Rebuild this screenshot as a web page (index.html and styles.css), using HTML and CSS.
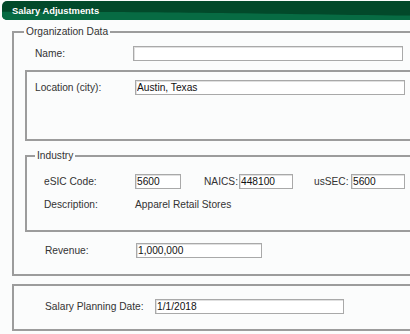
FILE: index.html
```html
<!DOCTYPE html>
<html lang="en">
<head>
<meta charset="utf-8">
<title>Salary Adjustments</title>
<link rel="stylesheet" href="styles.css">
</head>
<body>
<div class="page">
  <div class="titlebar">
    <svg class="titlebar-bg" viewBox="0 0 420 19" preserveAspectRatio="none" aria-hidden="true">
      <path d="M0 10.7 C150 10.4 240 12.6 420 15 L420 19 L0 19 Z" fill="#076b43"/>
    </svg>
    <span class="title">Salary Adjustments</span>
  </div>

  <fieldset class="group org">
    <legend>Organization Data</legend>
    <div class="row name-row">
      <label class="lbl w-name">Name:</label>
      <input class="txt w-wide" type="text" value="">
    </div>

    <div class="box location">
      <div class="row">
        <label class="lbl w-loc">Location (city):</label>
        <input class="txt w-wide" type="text" value="Austin, Texas">
      </div>
    </div>

    <fieldset class="group industry">
      <legend>Industry</legend>
      <div class="row codes">
        <label class="lbl w-code">eSIC Code:</label>
        <input class="txt w-esic" type="text" value="5600">
        <label class="lbl w-naics">NAICS:</label>
        <input class="txt w-code-in" type="text" value="448100">
        <label class="lbl w-ussec">usSEC:</label>
        <input class="txt w-code-in" type="text" value="5600">
      </div>
      <div class="row desc">
        <span class="lbl w-code">Description:</span>
        <span class="value">Apparel Retail Stores</span>
      </div>
    </fieldset>

    <div class="row revenue">
      <label class="lbl w-code">Revenue:</label>
      <input class="txt w-rev" type="text" value="1,000,000">
    </div>
  </fieldset>

  <div class="box planning">
    <div class="row">
      <label class="lbl w-plan">Salary Planning Date:</label>
      <input class="txt w-date" type="text" value="1/1/2018">
    </div>
  </div>
</div>
</body>
</html>
```

FILE: styles.css
```css
html, body {
  margin: 0;
  overflow: hidden;
}

body {
  background: #fbfcfc;
  font-family: "Liberation Sans", Arial, sans-serif;
  font-size: 10.2px;
  color: #333;
}

.page {
  width: 440px;
  padding: 1px 0 0 2px;
}

/* title bar */
.titlebar {
  position: relative;
  height: 19px;
  border-radius: 5px 0 0 5px;
  background: #02492a;
  overflow: hidden;
  display: flex;
  align-items: center;
  padding-left: 10px;
}

.titlebar-bg {
  position: absolute;
  left: 0;
  top: 0;
  width: 100%;
  height: 100%;
}

.title {
  position: relative;
  color: #fff;
  font-weight: bold;
  font-size: 9.4px;
}

/* groups */
.group {
  margin: 0;
  padding: 0;
  min-width: 0;
  border: 2px solid #9c9c9c;
  box-sizing: border-box;
}

.group legend {
  padding: 0 2px;
  line-height: 12px;
  color: #333;
}

.box {
  border: 2px solid #9c9c9c;
  box-sizing: border-box;
}

.org {
  width: 428px;
  margin: 6px 0 0 10px;
  padding: 0 0 16px 10px;
}

.location {
  height: 71px;
  margin: 9px 0 0 1px;
  padding: 8px 0 0 8px;
}

.industry {
  margin: 9px 0 0 1px;
  padding: 0 0 19px 8px;
}

.planning {
  width: 428px;
  height: 47px;
  margin: 8px 0 0 10px;
  padding: 13px 0 0 31px;
}

/* rows */
.row {
  display: flex;
  align-items: center;
}

.name-row {
  margin-top: 8px;
  padding-left: 11px;
}

.codes {
  margin-top: 12px;
  padding-left: 9px;
}

.desc {
  margin-top: 10px;
  padding-left: 9px;
  line-height: 12px;
}

.revenue {
  margin-top: 11px;
  padding-left: 21px;
}

.lbl {
  flex: none;
  color: #333;
}

.value {
  color: #333;
}

.w-name { width: 98px; }
.w-loc { width: 100px; }
.w-code { width: 91px; }
.w-naics { width: 35px; margin-left: 23px; }
.w-ussec { width: 37px; margin-left: 21px; }
.w-plan { width: 110px; }

/* inputs */
.txt {
  box-sizing: border-box;
  flex: none;
  height: 15px;
  margin: 0;
  padding: 0 1px;
  border: 1px solid #a9a9a9;
  box-shadow: inset 1px 1px 0 #e0e0e0;
  background: #fff;
  font: inherit;
  color: #111;
  outline: none;
}

.w-wide { width: 270px; }
.w-esic { width: 46px; }
.w-code-in { width: 54px; }
.w-rev { width: 126px; }
.w-date { width: 189px; }
```
